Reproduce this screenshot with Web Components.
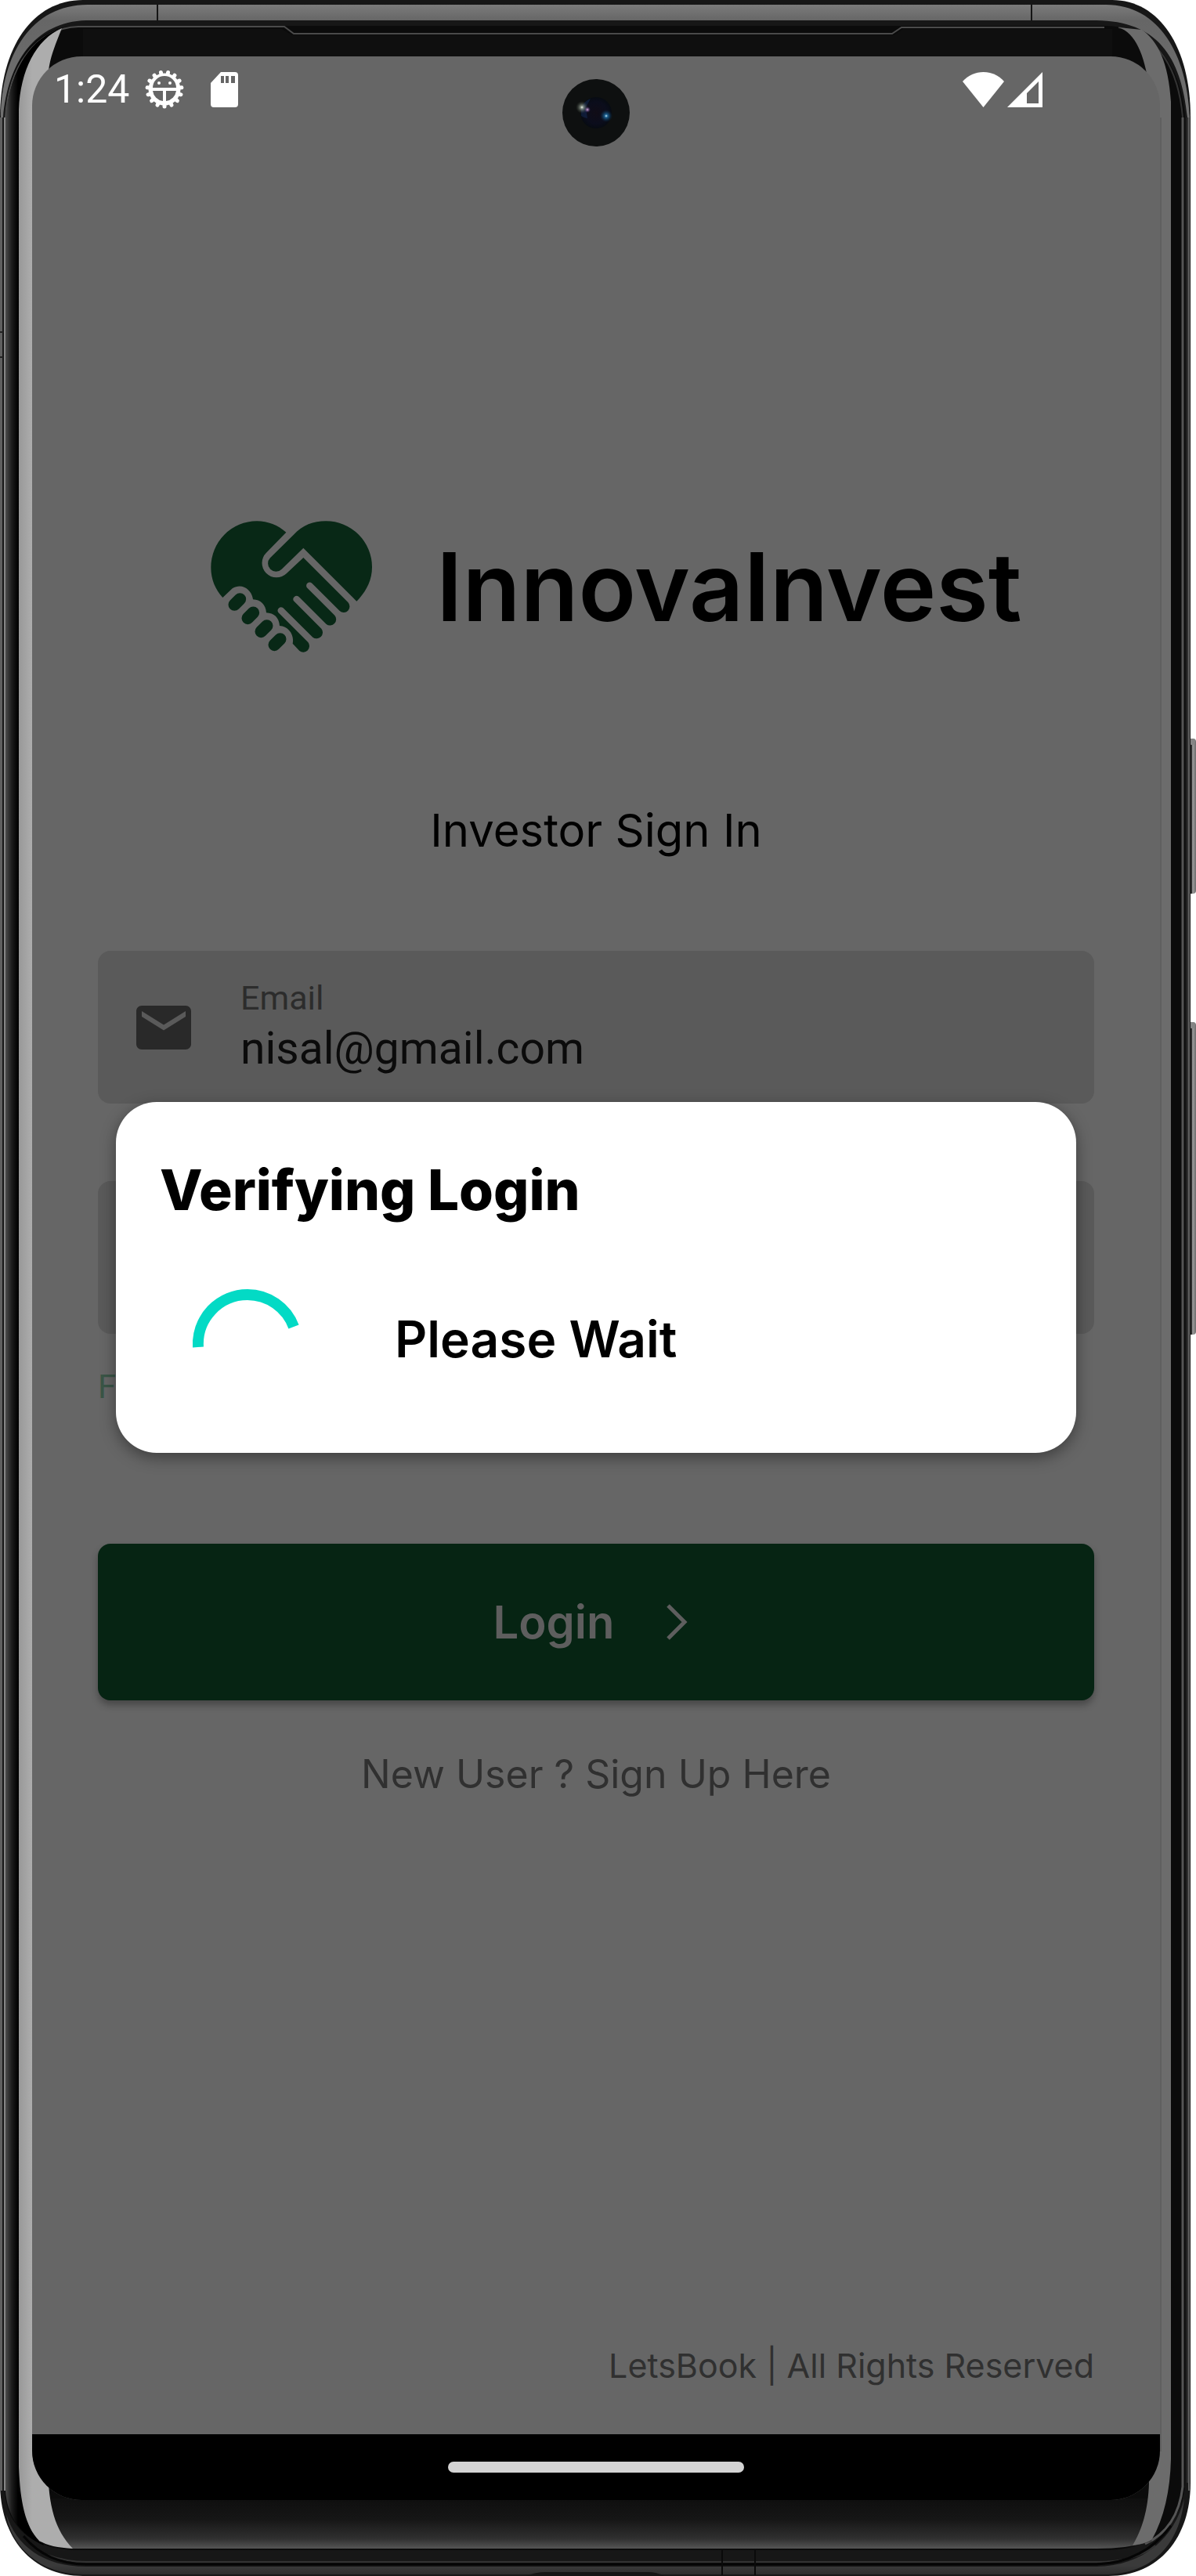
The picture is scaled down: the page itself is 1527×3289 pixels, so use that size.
<!DOCTYPE html>
<html lang="en">
<head>
<meta charset="utf-8">
<meta name="viewport" content="width=device-width, initial-scale=1">
<title>InnovaInvest</title>
<style>
  html, body { margin: 0; background: #fff; }
  body { font-family: Inter, "Open Sans", sans-serif; color: #000; }
</style>
</head>
<body>
<device-frame>
  <status-bar></status-bar>
  <login-screen></login-screen>
  <nav-bar></nav-bar>
  <progress-dialog slot="overlay" heading="Verifying Login">Please Wait</progress-dialog>
</device-frame>

<script>
const define = (name, html, setup) => {
  const template = document.createElement('template');
  template.innerHTML = html;
  customElements.define(name, class extends HTMLElement {
    constructor() {
      super();
      this.attachShadow({ mode: 'open' }).append(template.content.cloneNode(true));
    }
    connectedCallback() { if (setup) setup(this, this.shadowRoot); }
  });
};

define('device-frame', `
<style>
  :host { display: flex; position: relative; box-sizing: border-box; min-height: 100vh; padding: 72px 46px 97px 41px; }
  .body { position: absolute; inset: 0; width: 100%; height: 100%; }
  .screen { position: relative; flex: 1; display: flex; flex-direction: column; background: #666; border-radius: 63px; overflow: hidden; }
  .overlay { position: absolute; inset: 82px 0 84px; display: flex; align-items: center; padding: 0 107px; }
  .camera { position: absolute; top: 29px; left: 50%; margin-left: -43px; width: 86px; height: 86px; }
</style>
<svg class="body" viewBox="0 0 1527 3289" preserveAspectRatio="none" aria-hidden="true">
  <defs>
    <linearGradient id="rim" x1="0" y1="5" x2="0" y2="130" gradientUnits="userSpaceOnUse">
      <stop offset="0" stop-color="#7c7c7c"/><stop offset=".17" stop-color="#666"/><stop offset="1" stop-color="#707070"/>
    </linearGradient>
    <linearGradient id="left" x1="7" x2="23" y1="0" y2="0" gradientUnits="userSpaceOnUse">
      <stop offset="0" stop-color="#4c4c4c"/><stop offset=".5" stop-color="#1c1c1c"/><stop offset="1" stop-color="#000"/>
    </linearGradient>
    <linearGradient id="glint" x1="24" x2="41" y1="0" y2="0" gradientUnits="userSpaceOnUse">
      <stop offset="0" stop-color="#989898"/><stop offset="1" stop-color="#adadad"/>
    </linearGradient>
    <linearGradient id="chin" x1="0" x2="0" y1="3192" y2="3254" gradientUnits="userSpaceOnUse">
      <stop offset="0" stop-color="#0f0f0f"/><stop offset=".4" stop-color="#161616"/><stop offset=".8" stop-color="#303030"/><stop offset="1" stop-color="#555"/>
    </linearGradient>
    <linearGradient id="lip" x1="0" x2="0" y1="3276" y2="3289" gradientUnits="userSpaceOnUse">
      <stop offset="0" stop-color="#3a3a3a"/><stop offset="1" stop-color="#2a2a2a"/>
    </linearGradient>
    <linearGradient id="key" x1="1517" x2="1527" y1="0" y2="0" gradientUnits="userSpaceOnUse">
      <stop offset="0" stop-color="#161616"/><stop offset=".5" stop-color="#303030"/><stop offset=".56" stop-color="#a0a0a0"/><stop offset="1" stop-color="#6c6c6c"/>
    </linearGradient>
  </defs>
  <!-- side keys -->
  <rect x="1515" y="943" width="12" height="198" rx="4" fill="url(#key)"/>
  <rect x="1518" y="943" width="8" height="8" rx="3" fill="#858585"/>
  <rect x="1515" y="1305" width="12" height="399" rx="4" fill="url(#key)"/>
  <rect x="1518" y="1305" width="8" height="8" rx="3" fill="#858585"/>
  <!-- chassis -->
  <path d="M106 0H1420C1480 0 1520 60 1520 150V3170C1520 3240 1480 3289 1415 3289H106C40 3289 0 3240 0 3170V150C0 60 42 0 106 0Z" fill="#171717"/>
  <path d="M1 150C2 70 40 6 112 6H1412C1480 6 1516 70 1519 150H1516C1508 70 1476 27 1400 26H110C44 28 10 80 4 150Z" fill="url(#rim)"/>
  <path d="M0 150H3V3180H0ZM1517 150H1519V3180H1517Z" fill="#5f5f5f"/>
  <path d="M201 6V30M1317 6V27" stroke="#151515" stroke-width="2"/>
  <path d="M0 424H4M0 456H4" stroke="#222" stroke-width="2"/>
  <path d="M6 3180V150C10 80 44 33 100 33H1410C1470 33 1508 80 1513 150V3170C1510 3225 1470 3256 1410 3256H100C40 3256 8 3225 6 3180Z" fill="#0b0b0b"/>
  <path d="M7 3180V150C11 84 46 36 100 34H363L375 43H1139L1151 35H1410" fill="none" stroke="#4a4a4a" stroke-width="2"/>
  <path d="M6 3180V150" stroke="#858585" stroke-width="2"/>
  <path d="M7 150C14 86 40 48 79 36L24 150V3180L56 3250C24 3236 9 3210 7 3180Z" fill="url(#left)"/>
  <path d="M106 37H360L373 45H1141L1153 37H1420V74H106Z" fill="#0f0f0f"/>
  <path d="M1510 150V3175C1506 3210 1490 3235 1462 3248" fill="none" stroke="#555" stroke-width="3"/>
  <path d="M1516 150V3170" stroke="#484848" stroke-width="1"/>
  <path d="M1428 35C1480 44 1505 90 1510 150" fill="none" stroke="#333" stroke-width="2"/>
  <path d="M41 3190H1483L1470 3245Q1440 3254 1400 3254H93L50 3245Z" fill="url(#chin)"/>
  <!-- glass edge reflections -->
  <path d="M79 36C62 78 61 85 61 120V3150C62 3200 70 3230 93 3254C74 3253 60 3250 50 3244C32 3225 26 3195 24 3150V140C26 90 46 50 79 36Z" fill="url(#glint)"/>
  <path d="M1428 35C1450 42 1461 70 1467 110V3170C1466 3205 1458 3230 1446 3250C1458 3248 1466 3246 1471 3242C1486 3215 1494 3180 1495 3140V130C1492 80 1478 52 1458 38Z" fill="#6c6c6c"/>
  <path d="M1482 150V3130" stroke="#606060" stroke-width="2"/>
  <!-- lower rim -->
  <path d="M93 3255H1410" stroke="#0b0b0b" stroke-width="2"/>
  <path d="M60 3262Q85 3271 110 3271H1400Q1450 3271 1475 3250" fill="none" stroke="#333" stroke-width="2"/>
  <path d="M30 3238Q60 3274 110 3274H1400Q1460 3272 1495 3225" fill="none" stroke="#050505" stroke-width="3"/>
  <path d="M8 3210C20 3250 55 3277 110 3277H1400C1460 3276 1500 3240 1512 3190C1506 3250 1470 3287 1410 3287H106C50 3287 14 3250 8 3210Z" fill="url(#lip)"/>
  <path d="M672 3289Q684 3284 696 3284H828Q838 3284 848 3289Z" fill="#141414"/>
  <path d="M922 3256V3288M964 3256V3288" stroke="#0a0a0a" stroke-width="2"/>
</svg>
<div class="screen">
  <slot></slot>
  <svg class="camera" viewBox="0 0 86 86" aria-hidden="true">
    <defs>
      <radialGradient id="lens"><stop offset="0" stop-color="#100c16"/><stop offset=".7" stop-color="#0b0d1c"/><stop offset="1" stop-color="#070b12"/></radialGradient>
      <radialGradient id="spark"><stop offset="0" stop-color="#f4fbf0"/><stop offset=".25" stop-color="#a9b5a6" stop-opacity=".7"/><stop offset="1" stop-color="#3a443a" stop-opacity="0"/></radialGradient>
      <radialGradient id="pink"><stop offset="0" stop-color="#e0b4e8"/><stop offset="1" stop-color="#4a2a70" stop-opacity="0"/></radialGradient>
      <radialGradient id="blue"><stop offset="0" stop-color="#d4f2ff"/><stop offset=".25" stop-color="#1f74ac" stop-opacity=".8"/><stop offset="1" stop-color="#0a3050" stop-opacity="0"/></radialGradient>
    </defs>
    <circle cx="43" cy="43" r="43" fill="#0e1010"/>
    <circle cx="43" cy="43" r="20" fill="url(#lens)"/>
    <path d="M24 37A20 20 0 0 1 36 25L30 36L32 50A20 20 0 0 1 24 47Z" fill="#1a3a70" opacity=".35"/>
    <circle cx="25" cy="36" r="8" fill="url(#spark)"/>
    <circle cx="32" cy="39" r="4" fill="url(#pink)"/>
    <circle cx="56" cy="47" r="8" fill="url(#blue)"/>
  </svg>
  <div class="overlay"><slot name="overlay"></slot></div>
</div>`);

define('status-bar', `
<style>
  :host { display: flex; align-items: center; box-sizing: border-box; height: 82px; padding: 2px 150px 0 28px; color: #fff; font: 50px/60px Roboto, sans-serif; }
  svg { display: block; fill: #fff; }
  .gear { margin-left: 20px; }
  .card { margin-left: 34px; }
  .wifi { margin-left: auto; }
  .cell { margin-left: 4px; }
</style>
<time>1:24</time>
<svg class="gear" width="50" height="50" viewBox="0 0 50 50" aria-hidden="true">
  <circle cx="25" cy="25" r="20.500"/>
  <g stroke="#fff" stroke-width="5" stroke-linecap="round" class="teeth"></g>
  <path d="M10 23A15 15 0 0 1 40 23ZM10 27H23V40A15 15 0 0 1 10 27ZM27 27H40A15 15 0 0 1 27 40Z" fill="#666"/>
  <circle cx="18" cy="17" r="2"/><circle cx="32" cy="17" r="2"/>
</svg>
<svg class="card" width="35" height="45" viewBox="0 0 35 45" aria-hidden="true">
  <path fill-rule="evenodd" d="M13 0H31Q35 0 35 4V41Q35 45 31 45H4Q0 45 0 41V14ZM13 5V14H17V5ZM19 5V14H23V5ZM26 5V14H31V5Z"/>
</svg>
<svg class="wifi" width="53" height="45" viewBox="0 0 53 45" aria-hidden="true"><path d="M0 12C14-4 39-4 53 12L26.500 45Z"/></svg>
<svg class="cell" width="45" height="45" viewBox="0 0 45 45" aria-hidden="true"><path fill-rule="evenodd" d="M0 45L45 0V45ZM25 27V40H40V12Z"/></svg>`, (host, root) => {
  /* fifteen gear teeth, one pointing straight down */
  const teeth = root.querySelector('.teeth');
  for (let i = 0; i < 15; i++) {
    const tooth = document.createElementNS('http://www.w3.org/2000/svg', 'path');
    tooth.setAttribute('d', 'M25 43V47');
    tooth.setAttribute('transform', 'rotate(' + i * 24 + ' 25 25)');
    teeth.append(tooth);
  }
});

define('brand-mark', `
<style>
  :host { display: flex; align-items: center; gap: 82px; padding-left: 144px; }
  svg { flex: none; display: block; }
  h1 { margin: 0; font-size: 121px; line-height: 128px; font-weight: 600; white-space: nowrap; }
</style>
<svg width="206" height="168" viewBox="87 104 618 504" fill="#082816" aria-hidden="true">
  <path d="M133 398C105 367 88 328 88 283A176 177 0 0 1 264 105C306 105 345 121 376 148L300 226A55 55 0 0 0 378 305L442 245L613 416A23 23 0 0 1 581 449L475 343A12.500 12.500 0 0 0 457 361L562 466A23.500 23.500 0 0 1 530 500L424 394A13 13 0 0 0 405 411L511 517A23.500 23.500 0 0 1 478 550L364 437A13 13 0 0 0 346 455L460 569A23.500 23.500 0 0 1 427 602L401 574C408 540 385 508 351 506C349 475 330 457 300 456C298 425 278 406 249 405C244 365 205 340 170 363Z"/>
  <path d="M646 412L442 208L359 289A30 30 0 0 1 315 246L404 158C440 120 480 105 528 105A176 176 0 0 1 705 282C705 335 680 378 646 412Z"/>
  <path d="M178 425L199 404M229 477L250 456M280 528L302 506M331 579L353 557" fill="none" stroke="#082816" stroke-width="47" stroke-linecap="round"/>
</svg>
<h1><slot></slot></h1>`);

define('text-field', `
<style>
  :host { display: block; }
  .box { display: flex; align-items: center; gap: 56px; box-sizing: border-box; height: 195px; padding: 0 42px; border-radius: 16px; background: #5a5a5a; font-family: Roboto, sans-serif; }
  svg { flex: none; fill: #292929; }
  .text { flex: 1; display: flex; flex-direction: column; gap: 4px; padding-bottom: 5px; }
  label { font-size: 43px; line-height: 56px; color: #2c2c2c; }
  input { width: 100%; height: 66px; margin: 0; padding: 0; border: 0; outline: 0; background: none; color: #0b0b0b; font: 57px/66px Roboto, sans-serif; }
</style>
<div class="box">
  <svg width="84" height="84" viewBox="0 0 24 24" aria-hidden="true"><path/></svg>
  <div class="text"><label for="control"></label><input id="control"></div>
</div>`, (host, root) => {
  const icons = {
    mail: 'M20 4H4c-1.100 0-1.990.900-1.990 2L2 18c0 1.100.900 2 2 2h16c1.100 0 2-.900 2-2V6c0-1.100-.900-2-2-2zm0 4l-8 5-8-5V6l8 5 8-5v2z',
    lock: 'M18 8h-1V6c0-2.760-2.240-5-5-5S7 3.240 7 6v2H6c-1.100 0-2 .900-2 2v10c0 1.100.900 2 2 2h12c1.100 0 2-.900 2-2V10c0-1.100-.900-2-2-2zM9 6c0-1.660 1.340-3 3-3s3 1.340 3 3v2H9z'
  };
  const input = root.querySelector('input');
  root.querySelector('path').setAttribute('d', icons[host.getAttribute('icon')]);
  input.type = host.getAttribute('type');
  input.value = host.getAttribute('value') || '';
  if (host.hasAttribute('label')) root.querySelector('label').textContent = host.getAttribute('label');
  else { root.querySelector('label').remove(); input.setAttribute('aria-label', 'Password'); }
});

define('action-button', `
<style>
  :host { display: block; }
  button { display: flex; align-items: center; justify-content: center; gap: 64px; width: 100%; height: 200px; margin: 0; padding: 0 12px 0 0; border: 0; border-radius: 16px; background: #062413; color: #5e5e5e; font: 600 58px/68px Inter, sans-serif; box-shadow: 0 6px 10px rgba(0,0,0,.3); }
</style>
<button type="submit"><span><slot></slot></span>
  <svg width="32" height="48" viewBox="0 0 32 48" fill="none" stroke="#5e5e5e" stroke-width="5" aria-hidden="true"><path d="M4 3L25 24L4 45"/></svg>
</button>`);

define('login-screen', `
<style>
  :host { flex: 1; display: flex; flex-direction: column; padding: 511px 84px 63px; }
  h2 { margin: 193px 0 120px; font-size: 58px; line-height: 68px; font-weight: 400; text-align: center; }
  form { display: flex; flex-direction: column; }
  text-field + text-field { margin-top: 99px; }
  a { text-decoration: none; }
  .forgot { align-self: flex-start; margin: 44px 0 176px; font: 42px/48px Roboto, sans-serif; color: #3a5546; }
  .signup { align-self: center; margin-top: 64px; font-size: 50px; line-height: 60px; color: #303030; }
  footer { margin-top: auto; text-align: right; font-size: 43px; line-height: 50px; color: #303030; }
</style>
<brand-mark>InnovaInvest</brand-mark>
<h2>Investor Sign In</h2>
<form>
  <text-field icon="mail" type="email" label="Email" value="nisal@gmail.com"></text-field>
  <text-field icon="lock" type="password"></text-field>
  <a class="forgot" href="#forgot">Forgot Password ?</a>
  <action-button>Login</action-button>
</form>
<a class="signup" href="#signup">New User ? Sign Up Here</a>
<footer>LetsBook | All Rights Reserved</footer>`);

define('nav-bar', `
<style>
  :host { display: flex; justify-content: center; align-items: center; height: 84px; background: #000; }
  i { display: block; width: 378px; height: 14px; border-radius: 7px; background: #d4d4d4; }
</style><i></i>`);

define('progress-dialog', `
<style>
  :host { flex: 1; display: block; padding: 70px 56px 69px; border-radius: 52px; background: #fff; box-shadow: 0 6px 20px rgba(0,0,0,.4); }
  h3 { margin: 0 0 85px; font-size: 71px; line-height: 84px; font-weight: 800; }
  .row { display: flex; gap: 118px; padding-left: 42px; }
  p { margin: 0; font-size: 64px; line-height: 128px; font-weight: 600; }
</style>
<div role="dialog" aria-labelledby="title">
  <h3 id="title"></h3>
  <div class="row">
    <svg width="140" height="140" viewBox="0 0 140 140" role="progressbar" aria-label="Loading"><path d="M7 74A63 63 0 0 1 70 7A63 63 0 0 1 129 48" fill="none" stroke="#03dac5" stroke-width="14"/></svg>
    <p><slot></slot></p>
  </div>
</div>`, (host, root) => { root.querySelector('h3').textContent = host.getAttribute('heading'); });
</script>
</body>
</html>
